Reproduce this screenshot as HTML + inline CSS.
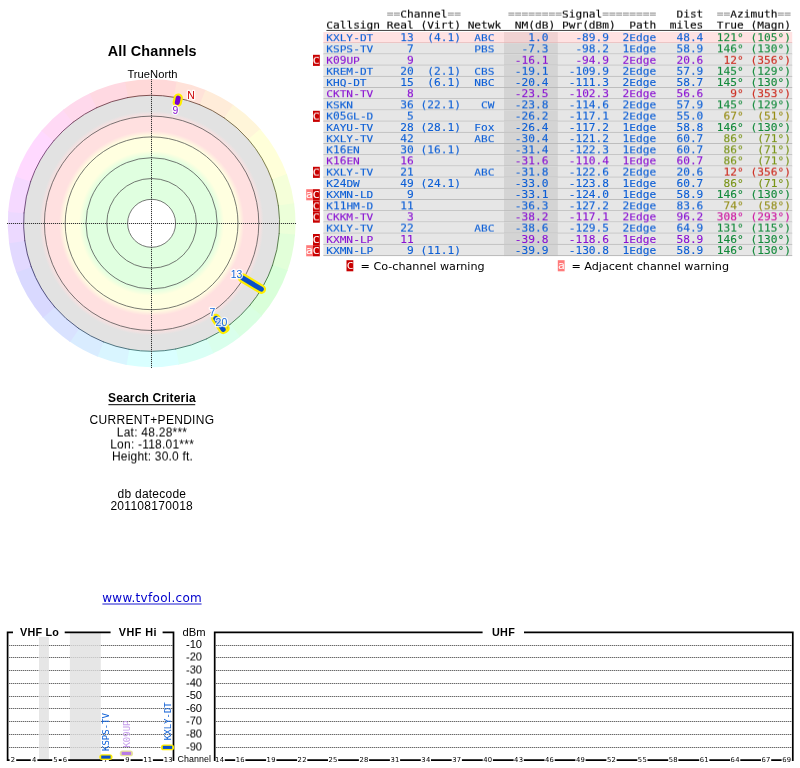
<!DOCTYPE html>
<html lang="en"><head><meta charset="utf-8"><title>TV Fool - All Channels</title>
<style>html,body{margin:0;padding:0;background:#fff}body{width:800px;height:768px;overflow:hidden}svg{display:block;will-change:opacity}text{white-space:pre}.b{fill:#0d5fd6;stroke:#0d5fd6}.p{fill:#8a12d2;stroke:#8a12d2}.g{fill:#148a3c;stroke:#148a3c}.o{fill:#968c14;stroke:#968c14}.y{fill:#7a9418;stroke:#7a9418}.z{fill:#948f1a;stroke:#948f1a}.r{fill:#cc2a1e;stroke:#cc2a1e}.m{fill:#cc14a0;stroke:#cc14a0}.k{fill:#000;stroke:#000}.e{fill:#8c8c8c;stroke:#8c8c8c}.w{fill:#fff;stroke:#fff}</style>
</head><body>
<svg width="800" height="768" viewBox="0 0 800 768">
<defs>
<filter id="s2" x="-5%" y="-40%" width="110%" height="180%" color-interpolation-filters="sRGB"><feConvolveMatrix order="1 3" kernelMatrix="0 0.8 0.2" divisor="1" edgeMode="none" preserveAlpha="false"/></filter>
<filter id="s4" x="-5%" y="-40%" width="110%" height="180%" color-interpolation-filters="sRGB"><feConvolveMatrix order="1 3" kernelMatrix="0 0.6 0.4" divisor="1" edgeMode="none" preserveAlpha="false"/></filter>
<filter id="s5" x="-5%" y="-40%" width="110%" height="180%" color-interpolation-filters="sRGB"><feConvolveMatrix order="1 3" kernelMatrix="0 0.5 0.5" divisor="1" edgeMode="none" preserveAlpha="false"/></filter>
<filter id="s6" x="-5%" y="-40%" width="110%" height="180%" color-interpolation-filters="sRGB"><feConvolveMatrix order="1 3" kernelMatrix="0 0.4 0.6" divisor="1" edgeMode="none" preserveAlpha="false"/></filter>
<filter id="s8" x="-5%" y="-40%" width="110%" height="180%" color-interpolation-filters="sRGB"><feConvolveMatrix order="1 3" kernelMatrix="0 0.2 0.8" divisor="1" edgeMode="none" preserveAlpha="false"/></filter>
<radialGradient id="rg" gradientUnits="userSpaceOnUse" cx="151.6" cy="223.3" r="128.0"><stop offset="0.0000" stop-color="#e0ffe0"/><stop offset="0.5156" stop-color="#e0ffe0"/><stop offset="0.5664" stop-color="#ffffe0"/><stop offset="0.6781" stop-color="#ffffe0"/><stop offset="0.7227" stop-color="#ffe0e0"/><stop offset="0.8320" stop-color="#ffe0e0"/><stop offset="0.8750" stop-color="#e2e2e2"/><stop offset="1.0000" stop-color="#e2e2e2"/></radialGradient>
</defs>
<g id="radar">
<path d="M151.6 223.3L124.14 82.04A143.9 143.9 0 0 1 177.58 81.76Z" fill="#ffd9d9"/>
<path d="M151.6 223.3L176.59 81.59A143.9 143.9 0 0 1 206.44 90.26Z" fill="#ffe2d9"/>
<path d="M151.6 223.3L205.51 89.88A143.9 143.9 0 0 1 233.93 105.28Z" fill="#ffecd9"/>
<path d="M151.6 223.3L233.11 104.71A143.9 143.9 0 0 1 260.86 129.65Z" fill="#fff5d9"/>
<path d="M151.6 223.3L260.20 128.89A143.9 143.9 0 0 1 287.16 175.03Z" fill="#ffffd9"/>
<path d="M151.6 223.3L286.82 174.08A143.9 143.9 0 0 1 294.24 204.27Z" fill="#f5ffd9"/>
<path d="M151.6 223.3L294.10 203.27A143.9 143.9 0 0 1 294.97 235.59Z" fill="#ecffd9"/>
<path d="M151.6 223.3L295.06 234.59A143.9 143.9 0 0 1 287.33 271.10Z" fill="#e2ffd9"/>
<path d="M151.6 223.3L287.66 270.15A143.9 143.9 0 0 1 261.19 316.56Z" fill="#d9ffd9"/>
<path d="M151.6 223.3L261.83 315.80A143.9 143.9 0 0 1 239.40 337.31Z" fill="#d9ffe2"/>
<path d="M151.6 223.3L240.19 336.69A143.9 143.9 0 0 1 212.64 353.61Z" fill="#d9ffec"/>
<path d="M151.6 223.3L213.55 353.18A143.9 143.9 0 0 1 178.07 364.74Z" fill="#d9fff5"/>
<path d="M151.6 223.3L179.06 364.56A143.9 143.9 0 0 1 125.62 364.84Z" fill="#d9ffff"/>
<path d="M151.6 223.3L126.61 365.01A143.9 143.9 0 0 1 96.76 356.34Z" fill="#d9f5ff"/>
<path d="M151.6 223.3L97.69 356.72A143.9 143.9 0 0 1 69.27 341.32Z" fill="#d9ecff"/>
<path d="M151.6 223.3L70.09 341.89A143.9 143.9 0 0 1 42.34 316.95Z" fill="#d9e2ff"/>
<path d="M151.6 223.3L43.00 317.71A143.9 143.9 0 0 1 16.04 271.57Z" fill="#d9d9ff"/>
<path d="M151.6 223.3L16.38 272.52A143.9 143.9 0 0 1 8.96 242.33Z" fill="#e2d9ff"/>
<path d="M151.6 223.3L9.10 243.33A143.9 143.9 0 0 1 8.23 211.01Z" fill="#ecd9ff"/>
<path d="M151.6 223.3L8.14 212.01A143.9 143.9 0 0 1 15.87 175.50Z" fill="#f5d9ff"/>
<path d="M151.6 223.3L15.54 176.45A143.9 143.9 0 0 1 42.01 130.04Z" fill="#ffd9ff"/>
<path d="M151.6 223.3L41.37 130.80A143.9 143.9 0 0 1 63.80 109.29Z" fill="#ffd9f5"/>
<path d="M151.6 223.3L63.01 109.91A143.9 143.9 0 0 1 90.56 92.99Z" fill="#ffd9ec"/>
<path d="M151.6 223.3L89.65 93.42A143.9 143.9 0 0 1 125.13 81.86Z" fill="#ffd9e2"/>
<circle cx="151.6" cy="223.3" r="128.0" fill="url(#rg)"/>
<circle cx="151.6" cy="223.3" r="24.0" fill="#fff"/>
<g fill="none" stroke="#4c4c4c" stroke-width="0.75">
<circle cx="151.6" cy="223.3" r="24.0"/>
<circle cx="151.6" cy="223.3" r="44.8"/>
<circle cx="151.6" cy="223.3" r="65.6"/>
<circle cx="151.6" cy="223.3" r="86.4"/>
<circle cx="151.6" cy="223.3" r="107.2"/>
</g>
<g fill="none" stroke-width="0.85">
<path d="M127.18 97.65A128.0 128.0 0 0 1 174.49 97.36" stroke="#6b3636"/>
<path d="M173.83 97.24A128.0 128.0 0 0 1 200.17 104.87" stroke="#6b4336"/>
<path d="M199.55 104.62A128.0 128.0 0 0 1 224.65 118.19" stroke="#6b5036"/>
<path d="M224.10 117.81A128.0 128.0 0 0 1 248.64 139.83" stroke="#6b5e36"/>
<path d="M248.20 139.32A128.0 128.0 0 0 1 272.11 180.15" stroke="#6b6b36"/>
<path d="M271.88 179.52A128.0 128.0 0 0 1 278.45 206.15" stroke="#5e6b36"/>
<path d="M278.35 205.49A128.0 128.0 0 0 1 279.15 234.01" stroke="#506b36"/>
<path d="M279.21 233.34A128.0 128.0 0 0 1 272.41 265.61" stroke="#436b36"/>
<path d="M272.63 264.97A128.0 128.0 0 0 1 249.22 306.09" stroke="#366b36"/>
<path d="M249.65 305.58A128.0 128.0 0 0 1 229.88 324.58" stroke="#366b43"/>
<path d="M230.40 324.17A128.0 128.0 0 0 1 206.10 339.12" stroke="#366b50"/>
<path d="M206.71 338.83A128.0 128.0 0 0 1 175.37 349.07" stroke="#366b5e"/>
<path d="M176.02 348.95A128.0 128.0 0 0 1 128.71 349.24" stroke="#366b6b"/>
<path d="M129.37 349.36A128.0 128.0 0 0 1 103.03 341.73" stroke="#365e6b"/>
<path d="M103.65 341.98A128.0 128.0 0 0 1 78.55 328.41" stroke="#36506b"/>
<path d="M79.10 328.79A128.0 128.0 0 0 1 54.56 306.77" stroke="#36436b"/>
<path d="M55.00 307.28A128.0 128.0 0 0 1 31.09 266.45" stroke="#36366b"/>
<path d="M31.32 267.08A128.0 128.0 0 0 1 24.75 240.45" stroke="#43366b"/>
<path d="M24.85 241.11A128.0 128.0 0 0 1 24.05 212.59" stroke="#50366b"/>
<path d="M23.99 213.26A128.0 128.0 0 0 1 30.79 180.99" stroke="#5e366b"/>
<path d="M30.57 181.63A128.0 128.0 0 0 1 53.98 140.51" stroke="#6b366b"/>
<path d="M53.55 141.02A128.0 128.0 0 0 1 73.32 122.02" stroke="#6b365e"/>
<path d="M72.80 122.43A128.0 128.0 0 0 1 97.10 107.48" stroke="#6b3650"/>
<path d="M96.49 107.77A128.0 128.0 0 0 1 127.83 97.53" stroke="#6b3643"/>
</g>
<path d="M7 223.5H296M151.5 79V368" stroke="#000" stroke-opacity="0.14" stroke-width="1" fill="none"/>
<path d="M7 223.5H296M151.5 79V368" stroke="#333" stroke-width="1" stroke-dasharray="1 1" fill="none"/>
</g>
<g id="markers" fill="none" stroke-linecap="round">
<path d="M224.44 327.33L225.02 328.15" stroke="#fe0" stroke-width="9.4"/><path d="M224.44 327.33L225.02 328.15" stroke="#0a50c8" stroke-width="5"/>
<path d="M177.30 102.40L178.21 98.10" stroke="#fe0" stroke-width="9.4"/><path d="M177.30 102.40L178.21 98.10" stroke="#7a00d0" stroke-width="5"/>
<path d="M215.80 318.47L223.18 329.42" stroke="#fe0" stroke-width="9.4"/><path d="M215.80 318.47L223.18 329.42" stroke="#0a50c8" stroke-width="5"/>
<path d="M242.46 277.89L261.32 289.22" stroke="#fe0" stroke-width="9.4"/><path d="M242.46 277.89L261.32 289.22" stroke="#0a50c8" stroke-width="5"/>
</g>
<g id="marker-labels" font-family="'Liberation Sans',Arial,Helvetica,sans-serif" font-size="10.4" text-anchor="middle" stroke="#fff" stroke-opacity="0.8" stroke-width="2.6" stroke-linejoin="round" paint-order="stroke">
<text x="191.0" y="99.0" fill="#cc0000">N</text>
<text x="175.3" y="114.0" fill="#8a12d2">9</text>
<text x="236.6" y="277.8" fill="#1668dc">13</text>
<text x="212.4" y="316.0" fill="#1668dc">7</text>
<text x="221.4" y="326.2" fill="#1668dc">20</text>
</g>
<g id="info" font-family="'Liberation Sans',Arial,Helvetica,sans-serif" fill="#000">
<text x="107.8" y="56" textLength="88.8" lengthAdjust="spacing" font-size="14.4" font-weight="bold">All Channels</text>
<text x="127.4" y="78" textLength="50.2" lengthAdjust="spacing" font-size="11.2">TrueNorth</text>
<text x="108.0" y="402" textLength="87.6" lengthAdjust="spacing" font-size="12" font-weight="bold">Search Criteria</text>
<path d="M108.4 404.7H195.2" stroke="#000" stroke-width="1"/>
<text x="89.6" y="424" textLength="124.4" lengthAdjust="spacing" font-size="12">CURRENT+PENDING</text>
<text x="116.8" y="436" textLength="70.2" lengthAdjust="spacing" font-size="12" filter="url(#s5)">Lat: 48.28***</text>
<text x="110.2" y="448" textLength="83.6" lengthAdjust="spacing" font-size="12" filter="url(#s5)">Lon: -118.01***</text>
<text x="112.0" y="460" textLength="80.8" lengthAdjust="spacing" font-size="12" filter="url(#s5)">Height: 30.0 ft.</text>
<text x="117.6" y="498" textLength="68.4" lengthAdjust="spacing" font-size="12">db datecode</text>
<text x="110.4" y="510" textLength="82.4" lengthAdjust="spacing" font-size="12">201108170018</text>
<text x="102.2" y="602" textLength="99.6" lengthAdjust="spacing" font-size="12" font-family="'DejaVu Sans','Liberation Sans',sans-serif" fill="#00c">www.tvfool.com</text>
<path d="M102.4 604H201.6" stroke="#00c" stroke-width="0.9"/>
</g>
<g id="table-bg">
<rect x="323.4" y="32.0" width="468.8" height="11.25" fill="#ffe2e2"/><rect x="504.0" y="32.0" width="53.8" height="11.25" fill="#f0d2d2"/><rect x="323.4" y="42.35" width="468.8" height="0.9" fill="#e2b6b6"/>
<rect x="323.4" y="43.2" width="468.8" height="11.25" fill="#e6e6e6"/><rect x="504.0" y="43.2" width="53.8" height="11.25" fill="#d4d4d4"/><rect x="323.4" y="53.55" width="468.8" height="0.9" fill="#b6b6b6"/>
<rect x="323.4" y="54.4" width="468.8" height="11.25" fill="#e6e6e6"/><rect x="504.0" y="54.4" width="53.8" height="11.25" fill="#d4d4d4"/><rect x="323.4" y="64.75" width="468.8" height="0.9" fill="#b6b6b6"/>
<rect x="313.0" y="54.8" width="6.8" height="11.1" fill="#c80000"/>
<rect x="323.4" y="65.6" width="468.8" height="11.25" fill="#e6e6e6"/><rect x="504.0" y="65.6" width="53.8" height="11.25" fill="#d4d4d4"/><rect x="323.4" y="75.95" width="468.8" height="0.9" fill="#b6b6b6"/>
<rect x="323.4" y="76.8" width="468.8" height="11.25" fill="#e6e6e6"/><rect x="504.0" y="76.8" width="53.8" height="11.25" fill="#d4d4d4"/><rect x="323.4" y="87.15" width="468.8" height="0.9" fill="#b6b6b6"/>
<rect x="323.4" y="88.0" width="468.8" height="11.25" fill="#e6e6e6"/><rect x="504.0" y="88.0" width="53.8" height="11.25" fill="#d4d4d4"/><rect x="323.4" y="98.35" width="468.8" height="0.9" fill="#b6b6b6"/>
<rect x="323.4" y="99.2" width="468.8" height="11.25" fill="#e6e6e6"/><rect x="504.0" y="99.2" width="53.8" height="11.25" fill="#d4d4d4"/><rect x="323.4" y="109.55" width="468.8" height="0.9" fill="#b6b6b6"/>
<rect x="323.4" y="110.4" width="468.8" height="11.25" fill="#e6e6e6"/><rect x="504.0" y="110.4" width="53.8" height="11.25" fill="#d4d4d4"/><rect x="323.4" y="120.75" width="468.8" height="0.9" fill="#b6b6b6"/>
<rect x="313.0" y="110.8" width="6.8" height="11.1" fill="#c80000"/>
<rect x="323.4" y="121.6" width="468.8" height="11.25" fill="#e6e6e6"/><rect x="504.0" y="121.6" width="53.8" height="11.25" fill="#d4d4d4"/><rect x="323.4" y="131.95" width="468.8" height="0.9" fill="#b6b6b6"/>
<rect x="323.4" y="132.8" width="468.8" height="11.25" fill="#e6e6e6"/><rect x="504.0" y="132.8" width="53.8" height="11.25" fill="#d4d4d4"/><rect x="323.4" y="143.15" width="468.8" height="0.9" fill="#b6b6b6"/>
<rect x="323.4" y="144.0" width="468.8" height="11.25" fill="#e6e6e6"/><rect x="504.0" y="144.0" width="53.8" height="11.25" fill="#d4d4d4"/><rect x="323.4" y="154.35" width="468.8" height="0.9" fill="#b6b6b6"/>
<rect x="323.4" y="155.2" width="468.8" height="11.25" fill="#e6e6e6"/><rect x="504.0" y="155.2" width="53.8" height="11.25" fill="#d4d4d4"/><rect x="323.4" y="165.55" width="468.8" height="0.9" fill="#b6b6b6"/>
<rect x="323.4" y="166.4" width="468.8" height="11.25" fill="#e6e6e6"/><rect x="504.0" y="166.4" width="53.8" height="11.25" fill="#d4d4d4"/><rect x="323.4" y="176.75" width="468.8" height="0.9" fill="#b6b6b6"/>
<rect x="313.0" y="166.8" width="6.8" height="11.1" fill="#c80000"/>
<rect x="323.4" y="177.6" width="468.8" height="11.25" fill="#e6e6e6"/><rect x="504.0" y="177.6" width="53.8" height="11.25" fill="#d4d4d4"/><rect x="323.4" y="187.95" width="468.8" height="0.9" fill="#b6b6b6"/>
<rect x="323.4" y="188.8" width="468.8" height="11.25" fill="#e6e6e6"/><rect x="504.0" y="188.8" width="53.8" height="11.25" fill="#d4d4d4"/><rect x="323.4" y="199.15" width="468.8" height="0.9" fill="#b6b6b6"/>
<rect x="313.0" y="189.2" width="6.8" height="11.1" fill="#c80000"/>
<rect x="306.2" y="189.2" width="6.8" height="11.1" fill="#ff7a7a"/>
<rect x="323.4" y="200.0" width="468.8" height="11.25" fill="#e6e6e6"/><rect x="504.0" y="200.0" width="53.8" height="11.25" fill="#d4d4d4"/><rect x="323.4" y="210.35" width="468.8" height="0.9" fill="#b6b6b6"/>
<rect x="313.0" y="200.4" width="6.8" height="11.1" fill="#c80000"/>
<rect x="323.4" y="211.2" width="468.8" height="11.25" fill="#e6e6e6"/><rect x="504.0" y="211.2" width="53.8" height="11.25" fill="#d4d4d4"/><rect x="323.4" y="221.55" width="468.8" height="0.9" fill="#b6b6b6"/>
<rect x="313.0" y="211.6" width="6.8" height="11.1" fill="#c80000"/>
<rect x="323.4" y="222.4" width="468.8" height="11.25" fill="#e6e6e6"/><rect x="504.0" y="222.4" width="53.8" height="11.25" fill="#d4d4d4"/><rect x="323.4" y="232.75" width="468.8" height="0.9" fill="#b6b6b6"/>
<rect x="323.4" y="233.6" width="468.8" height="11.25" fill="#e6e6e6"/><rect x="504.0" y="233.6" width="53.8" height="11.25" fill="#d4d4d4"/><rect x="323.4" y="243.95" width="468.8" height="0.9" fill="#b6b6b6"/>
<rect x="313.0" y="234.0" width="6.8" height="11.1" fill="#c80000"/>
<rect x="323.4" y="244.8" width="468.8" height="11.25" fill="#e6e6e6"/><rect x="504.0" y="244.8" width="53.8" height="11.25" fill="#d4d4d4"/><rect x="323.4" y="255.15" width="468.8" height="0.9" fill="#b6b6b6"/>
<rect x="313.0" y="245.2" width="6.8" height="11.1" fill="#c80000"/>
<rect x="306.2" y="245.2" width="6.8" height="11.1" fill="#ff7a7a"/>
<rect x="346.5" y="260.2" width="6.8" height="11.1" fill="#c80000"/>
<rect x="557.8" y="260.2" width="6.8" height="11.1" fill="#ff7a7a"/>
<path d="M326.4 30.45H790.6" stroke="#111" stroke-width="0.8"/>
</g>
<g id="table" font-family="'DejaVu Sans Mono','Liberation Mono',monospace" font-size="10.4" stroke-width="0.12">
<g filter="url(#s6)"><text transform="matrix(1.0757 0 0 1 386.81 17)" class="e">==</text><text transform="matrix(1.0757 0 0 0.89 400.28 17)" class="k">C</text><text transform="matrix(1.0757 0 0 1 407.02 17)" class="k">hannel</text><text transform="matrix(1.0757 0 0 1 447.43 17)" class="e">==       </text><text transform="matrix(1.0757 0 0 1 508.04 17)" class="e">========</text><text transform="matrix(1.0757 0 0 0.89 561.92 17)" class="k">S</text><text transform="matrix(1.0757 0 0 1 568.66 17)" class="k">ignal</text><text transform="matrix(1.0757 0 0 1 602.34 17)" class="e">========   </text><text transform="matrix(1.0757 0 0 0.89 676.42 17)" class="k">D</text><text transform="matrix(1.0757 0 0 1 683.15 17)" class="k">ist  </text><text transform="matrix(1.0757 0 0 1 716.83 17)" class="e">==</text><text transform="matrix(1.0757 0 0 0.89 730.30 17)" class="k">A</text><text transform="matrix(1.0757 0 0 1 737.04 17)" class="k">zimuth</text><text transform="matrix(1.0757 0 0 1 777.44 17)" class="e">==</text></g>
<g filter="url(#s6)"><text transform="matrix(1.0757 0 0 0.89 326.20 28)" class="k">C</text><text transform="matrix(1.0757 0 0 1 332.94 28)" class="k">allsign </text><text transform="matrix(1.0757 0 0 0.89 386.81 28)" class="k">R</text><text transform="matrix(1.0757 0 0 1 393.55 28)" class="k">eal </text><text transform="matrix(1.0757 0 0 1 420.49 28)" class="k">(</text><text transform="matrix(1.0757 0 0 0.89 427.23 28)" class="k">V</text><text transform="matrix(1.0757 0 0 1 433.96 28)" class="k">irt) </text><text transform="matrix(1.0757 0 0 0.89 467.63 28)" class="k">N</text><text transform="matrix(1.0757 0 0 1 474.37 28)" class="k">etwk  </text><text transform="matrix(1.0757 0 0 0.89 514.78 28)" class="k">NM</text><text transform="matrix(1.0757 0 0 1 528.25 28)" class="k">(d</text><text transform="matrix(1.0757 0 0 0.89 541.72 28)" class="k">B</text><text transform="matrix(1.0757 0 0 1 548.46 28)" class="k">) </text><text transform="matrix(1.0757 0 0 0.89 561.92 28)" class="k">P</text><text transform="matrix(1.0757 0 0 1 568.66 28)" class="k">wr(d</text><text transform="matrix(1.0757 0 0 0.89 595.60 28)" class="k">B</text><text transform="matrix(1.0757 0 0 1 602.34 28)" class="k">m)  </text><text transform="matrix(1.0757 0 0 0.89 629.27 28)" class="k">P</text><text transform="matrix(1.0757 0 0 1 636.01 28)" class="k">ath  </text><text transform="matrix(1.0757 0 0 1 669.68 28)" class="k">miles  </text><text transform="matrix(1.0757 0 0 0.89 716.83 28)" class="k">T</text><text transform="matrix(1.0757 0 0 1 723.57 28)" class="k">rue </text><text transform="matrix(1.0757 0 0 1 750.50 28)" class="k">(</text><text transform="matrix(1.0757 0 0 0.89 757.24 28)" class="k">M</text><text transform="matrix(1.0757 0 0 1 763.98 28)" class="k">agn)</text></g>
<g filter="url(#s2)"><text transform="matrix(1.0757 0 0 0.89 326.20 41)" class="b">KXLY</text><text transform="matrix(1.0757 0 0 1 353.14 41)" class="b">-</text><text transform="matrix(1.0757 0 0 0.89 359.88 41)" class="b">DT    </text><text transform="matrix(1.0757 0 0 1 400.28 41)" class="b">13  </text><text transform="matrix(1.0757 0 0 1 427.23 41)" class="b">(4.1)  </text><text transform="matrix(1.0757 0 0 0.89 474.37 41)" class="b">ABC     </text><text transform="matrix(1.0757 0 0 1 528.25 41)" class="b">1.0    </text><text transform="matrix(1.0757 0 0 1 575.39 41)" class="b">-89.9  </text><text transform="matrix(1.0757 0 0 1 622.54 41)" class="b">2</text><text transform="matrix(1.0757 0 0 0.89 629.27 41)" class="b">E</text><text transform="matrix(1.0757 0 0 1 636.01 41)" class="b">dge   </text><text transform="matrix(1.0757 0 0 1 676.42 41)" class="b">48.4  </text><text transform="matrix(1.0757 0 0 1 716.83 41)" class="g">121° </text><text transform="matrix(1.0757 0 0 1 750.50 41)" class="g">(105°)</text></g>
<g filter="url(#s4)"><text transform="matrix(1.0757 0 0 0.89 326.20 52)" class="b">KSPS</text><text transform="matrix(1.0757 0 0 1 353.14 52)" class="b">-</text><text transform="matrix(1.0757 0 0 0.89 359.88 52)" class="b">TV     </text><text transform="matrix(1.0757 0 0 1 407.02 52)" class="b">7         </text><text transform="matrix(1.0757 0 0 0.89 474.37 52)" class="b">PBS    </text><text transform="matrix(1.0757 0 0 1 521.51 52)" class="b">-7.3    </text><text transform="matrix(1.0757 0 0 1 575.39 52)" class="b">-98.2  </text><text transform="matrix(1.0757 0 0 1 622.54 52)" class="b">1</text><text transform="matrix(1.0757 0 0 0.89 629.27 52)" class="b">E</text><text transform="matrix(1.0757 0 0 1 636.01 52)" class="b">dge   </text><text transform="matrix(1.0757 0 0 1 676.42 52)" class="b">58.9  </text><text transform="matrix(1.0757 0 0 1 716.83 52)" class="g">146° </text><text transform="matrix(1.0757 0 0 1 750.50 52)" class="g">(130°)</text></g>
<g filter="url(#s8)"><text transform="matrix(1.0757 0 0 0.89 312.73 63)" class="w">C </text><text transform="matrix(1.0757 0 0 0.89 326.20 63)" class="p">K</text><text transform="matrix(1.0757 0 0 1 332.94 63)" class="p">09</text><text transform="matrix(1.0757 0 0 0.89 346.40 63)" class="p">UP       </text><text transform="matrix(1.0757 0 0 1 407.02 63)" class="p">9               </text><text transform="matrix(1.0757 0 0 1 514.78 63)" class="p">-16.1    </text><text transform="matrix(1.0757 0 0 1 575.39 63)" class="p">-94.9  </text><text transform="matrix(1.0757 0 0 1 622.54 63)" class="p">2</text><text transform="matrix(1.0757 0 0 0.89 629.27 63)" class="p">E</text><text transform="matrix(1.0757 0 0 1 636.01 63)" class="p">dge   </text><text transform="matrix(1.0757 0 0 1 676.42 63)" class="p">20.6   </text><text transform="matrix(1.0757 0 0 1 723.57 63)" class="r">12° </text><text transform="matrix(1.0757 0 0 1 750.50 63)" class="r">(356°)</text></g>
<g filter="url(#s8)"><text transform="matrix(1.0757 0 0 0.89 326.20 74)" class="b">KREM</text><text transform="matrix(1.0757 0 0 1 353.14 74)" class="b">-</text><text transform="matrix(1.0757 0 0 0.89 359.88 74)" class="b">DT    </text><text transform="matrix(1.0757 0 0 1 400.28 74)" class="b">20  </text><text transform="matrix(1.0757 0 0 1 427.23 74)" class="b">(2.1)  </text><text transform="matrix(1.0757 0 0 0.89 474.37 74)" class="b">CBS   </text><text transform="matrix(1.0757 0 0 1 514.78 74)" class="b">-19.1   </text><text transform="matrix(1.0757 0 0 1 568.66 74)" class="b">-109.9  </text><text transform="matrix(1.0757 0 0 1 622.54 74)" class="b">2</text><text transform="matrix(1.0757 0 0 0.89 629.27 74)" class="b">E</text><text transform="matrix(1.0757 0 0 1 636.01 74)" class="b">dge   </text><text transform="matrix(1.0757 0 0 1 676.42 74)" class="b">57.9  </text><text transform="matrix(1.0757 0 0 1 716.83 74)" class="g">145° </text><text transform="matrix(1.0757 0 0 1 750.50 74)" class="g">(129°)</text></g>
<g><text transform="matrix(1.0757 0 0 0.89 326.20 86)" class="b">KHQ</text><text transform="matrix(1.0757 0 0 1 346.40 86)" class="b">-</text><text transform="matrix(1.0757 0 0 0.89 353.14 86)" class="b">DT     </text><text transform="matrix(1.0757 0 0 1 400.28 86)" class="b">15  </text><text transform="matrix(1.0757 0 0 1 427.23 86)" class="b">(6.1)  </text><text transform="matrix(1.0757 0 0 0.89 474.37 86)" class="b">NBC   </text><text transform="matrix(1.0757 0 0 1 514.78 86)" class="b">-20.4   </text><text transform="matrix(1.0757 0 0 1 568.66 86)" class="b">-111.3  </text><text transform="matrix(1.0757 0 0 1 622.54 86)" class="b">2</text><text transform="matrix(1.0757 0 0 0.89 629.27 86)" class="b">E</text><text transform="matrix(1.0757 0 0 1 636.01 86)" class="b">dge   </text><text transform="matrix(1.0757 0 0 1 676.42 86)" class="b">58.7  </text><text transform="matrix(1.0757 0 0 1 716.83 86)" class="g">145° </text><text transform="matrix(1.0757 0 0 1 750.50 86)" class="g">(130°)</text></g>
<g filter="url(#s2)"><text transform="matrix(1.0757 0 0 0.89 326.20 97)" class="p">CKTN</text><text transform="matrix(1.0757 0 0 1 353.14 97)" class="p">-</text><text transform="matrix(1.0757 0 0 0.89 359.88 97)" class="p">TV     </text><text transform="matrix(1.0757 0 0 1 407.02 97)" class="p">8               </text><text transform="matrix(1.0757 0 0 1 514.78 97)" class="p">-23.5   </text><text transform="matrix(1.0757 0 0 1 568.66 97)" class="p">-102.3  </text><text transform="matrix(1.0757 0 0 1 622.54 97)" class="p">2</text><text transform="matrix(1.0757 0 0 0.89 629.27 97)" class="p">E</text><text transform="matrix(1.0757 0 0 1 636.01 97)" class="p">dge   </text><text transform="matrix(1.0757 0 0 1 676.42 97)" class="p">56.6    </text><text transform="matrix(1.0757 0 0 1 730.30 97)" class="r">9° </text><text transform="matrix(1.0757 0 0 1 750.50 97)" class="r">(353°)</text></g>
<g filter="url(#s4)"><text transform="matrix(1.0757 0 0 0.89 326.20 108)" class="b">KSKN       </text><text transform="matrix(1.0757 0 0 1 400.28 108)" class="b">36 </text><text transform="matrix(1.0757 0 0 1 420.49 108)" class="b">(22.1)   </text><text transform="matrix(1.0757 0 0 0.89 481.11 108)" class="b">CW   </text><text transform="matrix(1.0757 0 0 1 514.78 108)" class="b">-23.8   </text><text transform="matrix(1.0757 0 0 1 568.66 108)" class="b">-114.6  </text><text transform="matrix(1.0757 0 0 1 622.54 108)" class="b">2</text><text transform="matrix(1.0757 0 0 0.89 629.27 108)" class="b">E</text><text transform="matrix(1.0757 0 0 1 636.01 108)" class="b">dge   </text><text transform="matrix(1.0757 0 0 1 676.42 108)" class="b">57.9  </text><text transform="matrix(1.0757 0 0 1 716.83 108)" class="g">145° </text><text transform="matrix(1.0757 0 0 1 750.50 108)" class="g">(129°)</text></g>
<g filter="url(#s6)"><text transform="matrix(1.0757 0 0 0.89 312.73 119)" class="w">C </text><text transform="matrix(1.0757 0 0 0.89 326.20 119)" class="b">K</text><text transform="matrix(1.0757 0 0 1 332.94 119)" class="b">05</text><text transform="matrix(1.0757 0 0 0.89 346.40 119)" class="b">GL</text><text transform="matrix(1.0757 0 0 1 359.88 119)" class="b">-</text><text transform="matrix(1.0757 0 0 0.89 366.61 119)" class="b">D     </text><text transform="matrix(1.0757 0 0 1 407.02 119)" class="b">5               </text><text transform="matrix(1.0757 0 0 1 514.78 119)" class="b">-26.2   </text><text transform="matrix(1.0757 0 0 1 568.66 119)" class="b">-117.1  </text><text transform="matrix(1.0757 0 0 1 622.54 119)" class="b">2</text><text transform="matrix(1.0757 0 0 0.89 629.27 119)" class="b">E</text><text transform="matrix(1.0757 0 0 1 636.01 119)" class="b">dge   </text><text transform="matrix(1.0757 0 0 1 676.42 119)" class="b">55.0   </text><text transform="matrix(1.0757 0 0 1 723.57 119)" class="o">67°  </text><text transform="matrix(1.0757 0 0 1 757.24 119)" class="o">(51°)</text></g>
<g><text transform="matrix(1.0757 0 0 0.89 326.20 131)" class="b">KAYU</text><text transform="matrix(1.0757 0 0 1 353.14 131)" class="b">-</text><text transform="matrix(1.0757 0 0 0.89 359.88 131)" class="b">TV    </text><text transform="matrix(1.0757 0 0 1 400.28 131)" class="b">28 </text><text transform="matrix(1.0757 0 0 1 420.49 131)" class="b">(28.1)  </text><text transform="matrix(1.0757 0 0 0.89 474.37 131)" class="b">F</text><text transform="matrix(1.0757 0 0 1 481.11 131)" class="b">ox   </text><text transform="matrix(1.0757 0 0 1 514.78 131)" class="b">-26.4   </text><text transform="matrix(1.0757 0 0 1 568.66 131)" class="b">-117.2  </text><text transform="matrix(1.0757 0 0 1 622.54 131)" class="b">1</text><text transform="matrix(1.0757 0 0 0.89 629.27 131)" class="b">E</text><text transform="matrix(1.0757 0 0 1 636.01 131)" class="b">dge   </text><text transform="matrix(1.0757 0 0 1 676.42 131)" class="b">58.8  </text><text transform="matrix(1.0757 0 0 1 716.83 131)" class="g">146° </text><text transform="matrix(1.0757 0 0 1 750.50 131)" class="g">(130°)</text></g>
<g filter="url(#s2)"><text transform="matrix(1.0757 0 0 0.89 326.20 142)" class="b">KXLY</text><text transform="matrix(1.0757 0 0 1 353.14 142)" class="b">-</text><text transform="matrix(1.0757 0 0 0.89 359.88 142)" class="b">TV    </text><text transform="matrix(1.0757 0 0 1 400.28 142)" class="b">42         </text><text transform="matrix(1.0757 0 0 0.89 474.37 142)" class="b">ABC   </text><text transform="matrix(1.0757 0 0 1 514.78 142)" class="b">-30.4   </text><text transform="matrix(1.0757 0 0 1 568.66 142)" class="b">-121.2  </text><text transform="matrix(1.0757 0 0 1 622.54 142)" class="b">1</text><text transform="matrix(1.0757 0 0 0.89 629.27 142)" class="b">E</text><text transform="matrix(1.0757 0 0 1 636.01 142)" class="b">dge   </text><text transform="matrix(1.0757 0 0 1 676.42 142)" class="b">60.7   </text><text transform="matrix(1.0757 0 0 1 723.57 142)" class="y">86°  </text><text transform="matrix(1.0757 0 0 1 757.24 142)" class="y">(71°)</text></g>
<g filter="url(#s4)"><text transform="matrix(1.0757 0 0 0.89 326.20 153)" class="b">K</text><text transform="matrix(1.0757 0 0 1 332.94 153)" class="b">16</text><text transform="matrix(1.0757 0 0 0.89 346.40 153)" class="b">EN      </text><text transform="matrix(1.0757 0 0 1 400.28 153)" class="b">30 </text><text transform="matrix(1.0757 0 0 1 420.49 153)" class="b">(16.1)        </text><text transform="matrix(1.0757 0 0 1 514.78 153)" class="b">-31.4   </text><text transform="matrix(1.0757 0 0 1 568.66 153)" class="b">-122.3  </text><text transform="matrix(1.0757 0 0 1 622.54 153)" class="b">1</text><text transform="matrix(1.0757 0 0 0.89 629.27 153)" class="b">E</text><text transform="matrix(1.0757 0 0 1 636.01 153)" class="b">dge   </text><text transform="matrix(1.0757 0 0 1 676.42 153)" class="b">60.7   </text><text transform="matrix(1.0757 0 0 1 723.57 153)" class="y">86°  </text><text transform="matrix(1.0757 0 0 1 757.24 153)" class="y">(71°)</text></g>
<g filter="url(#s4)"><text transform="matrix(1.0757 0 0 0.89 326.20 164)" class="p">K</text><text transform="matrix(1.0757 0 0 1 332.94 164)" class="p">16</text><text transform="matrix(1.0757 0 0 0.89 346.40 164)" class="p">EN      </text><text transform="matrix(1.0757 0 0 1 400.28 164)" class="p">16               </text><text transform="matrix(1.0757 0 0 1 514.78 164)" class="p">-31.6   </text><text transform="matrix(1.0757 0 0 1 568.66 164)" class="p">-110.4  </text><text transform="matrix(1.0757 0 0 1 622.54 164)" class="p">1</text><text transform="matrix(1.0757 0 0 0.89 629.27 164)" class="p">E</text><text transform="matrix(1.0757 0 0 1 636.01 164)" class="p">dge   </text><text transform="matrix(1.0757 0 0 1 676.42 164)" class="p">60.7   </text><text transform="matrix(1.0757 0 0 1 723.57 164)" class="y">86°  </text><text transform="matrix(1.0757 0 0 1 757.24 164)" class="y">(71°)</text></g>
<g filter="url(#s6)"><text transform="matrix(1.0757 0 0 0.89 312.73 175)" class="w">C </text><text transform="matrix(1.0757 0 0 0.89 326.20 175)" class="b">KXLY</text><text transform="matrix(1.0757 0 0 1 353.14 175)" class="b">-</text><text transform="matrix(1.0757 0 0 0.89 359.88 175)" class="b">TV    </text><text transform="matrix(1.0757 0 0 1 400.28 175)" class="b">21         </text><text transform="matrix(1.0757 0 0 0.89 474.37 175)" class="b">ABC   </text><text transform="matrix(1.0757 0 0 1 514.78 175)" class="b">-31.8   </text><text transform="matrix(1.0757 0 0 1 568.66 175)" class="b">-122.6  </text><text transform="matrix(1.0757 0 0 1 622.54 175)" class="b">2</text><text transform="matrix(1.0757 0 0 0.89 629.27 175)" class="b">E</text><text transform="matrix(1.0757 0 0 1 636.01 175)" class="b">dge   </text><text transform="matrix(1.0757 0 0 1 676.42 175)" class="b">20.6   </text><text transform="matrix(1.0757 0 0 1 723.57 175)" class="r">12° </text><text transform="matrix(1.0757 0 0 1 750.50 175)" class="r">(356°)</text></g>
<g><text transform="matrix(1.0757 0 0 0.89 326.20 187)" class="b">K</text><text transform="matrix(1.0757 0 0 1 332.94 187)" class="b">24</text><text transform="matrix(1.0757 0 0 0.89 346.40 187)" class="b">DW      </text><text transform="matrix(1.0757 0 0 1 400.28 187)" class="b">49 </text><text transform="matrix(1.0757 0 0 1 420.49 187)" class="b">(24.1)        </text><text transform="matrix(1.0757 0 0 1 514.78 187)" class="b">-33.0   </text><text transform="matrix(1.0757 0 0 1 568.66 187)" class="b">-123.8  </text><text transform="matrix(1.0757 0 0 1 622.54 187)" class="b">1</text><text transform="matrix(1.0757 0 0 0.89 629.27 187)" class="b">E</text><text transform="matrix(1.0757 0 0 1 636.01 187)" class="b">dge   </text><text transform="matrix(1.0757 0 0 1 676.42 187)" class="b">60.7   </text><text transform="matrix(1.0757 0 0 1 723.57 187)" class="y">86°  </text><text transform="matrix(1.0757 0 0 1 757.24 187)" class="y">(71°)</text></g>
<g><text transform="matrix(1.0757 0 0 1 306.00 198)" class="w">a</text><text transform="matrix(1.0757 0 0 0.89 312.73 198)" class="w">C </text><text transform="matrix(1.0757 0 0 0.89 326.20 198)" class="b">KXMN</text><text transform="matrix(1.0757 0 0 1 353.14 198)" class="b">-</text><text transform="matrix(1.0757 0 0 0.89 359.88 198)" class="b">LD     </text><text transform="matrix(1.0757 0 0 1 407.02 198)" class="b">9               </text><text transform="matrix(1.0757 0 0 1 514.78 198)" class="b">-33.1   </text><text transform="matrix(1.0757 0 0 1 568.66 198)" class="b">-124.0  </text><text transform="matrix(1.0757 0 0 1 622.54 198)" class="b">1</text><text transform="matrix(1.0757 0 0 0.89 629.27 198)" class="b">E</text><text transform="matrix(1.0757 0 0 1 636.01 198)" class="b">dge   </text><text transform="matrix(1.0757 0 0 1 676.42 198)" class="b">58.9  </text><text transform="matrix(1.0757 0 0 1 716.83 198)" class="g">146° </text><text transform="matrix(1.0757 0 0 1 750.50 198)" class="g">(130°)</text></g>
<g filter="url(#s4)"><text transform="matrix(1.0757 0 0 0.89 312.73 209)" class="w">C </text><text transform="matrix(1.0757 0 0 0.89 326.20 209)" class="b">K</text><text transform="matrix(1.0757 0 0 1 332.94 209)" class="b">11</text><text transform="matrix(1.0757 0 0 0.89 346.40 209)" class="b">HM</text><text transform="matrix(1.0757 0 0 1 359.88 209)" class="b">-</text><text transform="matrix(1.0757 0 0 0.89 366.61 209)" class="b">D    </text><text transform="matrix(1.0757 0 0 1 400.28 209)" class="b">11               </text><text transform="matrix(1.0757 0 0 1 514.78 209)" class="b">-36.3   </text><text transform="matrix(1.0757 0 0 1 568.66 209)" class="b">-127.2  </text><text transform="matrix(1.0757 0 0 1 622.54 209)" class="b">2</text><text transform="matrix(1.0757 0 0 0.89 629.27 209)" class="b">E</text><text transform="matrix(1.0757 0 0 1 636.01 209)" class="b">dge   </text><text transform="matrix(1.0757 0 0 1 676.42 209)" class="b">83.6   </text><text transform="matrix(1.0757 0 0 1 723.57 209)" class="z">74°  </text><text transform="matrix(1.0757 0 0 1 757.24 209)" class="z">(58°)</text></g>
<g filter="url(#s4)"><text transform="matrix(1.0757 0 0 0.89 312.73 220)" class="w">C </text><text transform="matrix(1.0757 0 0 0.89 326.20 220)" class="p">CKKM</text><text transform="matrix(1.0757 0 0 1 353.14 220)" class="p">-</text><text transform="matrix(1.0757 0 0 0.89 359.88 220)" class="p">TV     </text><text transform="matrix(1.0757 0 0 1 407.02 220)" class="p">3               </text><text transform="matrix(1.0757 0 0 1 514.78 220)" class="p">-38.2   </text><text transform="matrix(1.0757 0 0 1 568.66 220)" class="p">-117.1  </text><text transform="matrix(1.0757 0 0 1 622.54 220)" class="p">2</text><text transform="matrix(1.0757 0 0 0.89 629.27 220)" class="p">E</text><text transform="matrix(1.0757 0 0 1 636.01 220)" class="p">dge   </text><text transform="matrix(1.0757 0 0 1 676.42 220)" class="p">96.2  </text><text transform="matrix(1.0757 0 0 1 716.83 220)" class="m">308° </text><text transform="matrix(1.0757 0 0 1 750.50 220)" class="m">(293°)</text></g>
<g filter="url(#s6)"><text transform="matrix(1.0757 0 0 0.89 326.20 231)" class="b">KXLY</text><text transform="matrix(1.0757 0 0 1 353.14 231)" class="b">-</text><text transform="matrix(1.0757 0 0 0.89 359.88 231)" class="b">TV    </text><text transform="matrix(1.0757 0 0 1 400.28 231)" class="b">22         </text><text transform="matrix(1.0757 0 0 0.89 474.37 231)" class="b">ABC   </text><text transform="matrix(1.0757 0 0 1 514.78 231)" class="b">-38.6   </text><text transform="matrix(1.0757 0 0 1 568.66 231)" class="b">-129.5  </text><text transform="matrix(1.0757 0 0 1 622.54 231)" class="b">2</text><text transform="matrix(1.0757 0 0 0.89 629.27 231)" class="b">E</text><text transform="matrix(1.0757 0 0 1 636.01 231)" class="b">dge   </text><text transform="matrix(1.0757 0 0 1 676.42 231)" class="b">64.9  </text><text transform="matrix(1.0757 0 0 1 716.83 231)" class="g">131° </text><text transform="matrix(1.0757 0 0 1 750.50 231)" class="g">(115°)</text></g>
<g><text transform="matrix(1.0757 0 0 0.89 312.73 243)" class="w">C </text><text transform="matrix(1.0757 0 0 0.89 326.20 243)" class="p">KXMN</text><text transform="matrix(1.0757 0 0 1 353.14 243)" class="p">-</text><text transform="matrix(1.0757 0 0 0.89 359.88 243)" class="p">LP    </text><text transform="matrix(1.0757 0 0 1 400.28 243)" class="p">11               </text><text transform="matrix(1.0757 0 0 1 514.78 243)" class="p">-39.8   </text><text transform="matrix(1.0757 0 0 1 568.66 243)" class="p">-118.6  </text><text transform="matrix(1.0757 0 0 1 622.54 243)" class="p">1</text><text transform="matrix(1.0757 0 0 0.89 629.27 243)" class="p">E</text><text transform="matrix(1.0757 0 0 1 636.01 243)" class="p">dge   </text><text transform="matrix(1.0757 0 0 1 676.42 243)" class="p">58.9  </text><text transform="matrix(1.0757 0 0 1 716.83 243)" class="g">146° </text><text transform="matrix(1.0757 0 0 1 750.50 243)" class="g">(130°)</text></g>
<g><text transform="matrix(1.0757 0 0 1 306.00 254)" class="w">a</text><text transform="matrix(1.0757 0 0 0.89 312.73 254)" class="w">C </text><text transform="matrix(1.0757 0 0 0.89 326.20 254)" class="b">KXMN</text><text transform="matrix(1.0757 0 0 1 353.14 254)" class="b">-</text><text transform="matrix(1.0757 0 0 0.89 359.88 254)" class="b">LP     </text><text transform="matrix(1.0757 0 0 1 407.02 254)" class="b">9 </text><text transform="matrix(1.0757 0 0 1 420.49 254)" class="b">(11.1)        </text><text transform="matrix(1.0757 0 0 1 514.78 254)" class="b">-39.9   </text><text transform="matrix(1.0757 0 0 1 568.66 254)" class="b">-130.8  </text><text transform="matrix(1.0757 0 0 1 622.54 254)" class="b">1</text><text transform="matrix(1.0757 0 0 0.89 629.27 254)" class="b">E</text><text transform="matrix(1.0757 0 0 1 636.01 254)" class="b">dge   </text><text transform="matrix(1.0757 0 0 1 676.42 254)" class="b">58.9  </text><text transform="matrix(1.0757 0 0 1 716.83 254)" class="g">146° </text><text transform="matrix(1.0757 0 0 1 750.50 254)" class="g">(130°)</text></g>
</g>
<g id="legend" font-size="11.2"><text transform="matrix(1.0757 0 0 0.89 346.7 269)" font-family="'DejaVu Sans Mono','Liberation Mono',monospace" font-size="10.4" fill="#fff">C </text><text x="360.6" y="270" textLength="124" lengthAdjust="spacing" font-family="'DejaVu Sans','Liberation Sans',sans-serif">= Co-channel warning</text>
<text transform="matrix(1.0757 0 0 1 558 269)" font-family="'DejaVu Sans Mono','Liberation Mono',monospace" font-size="10.4" fill="#fff">a </text><text x="571.4" y="270" textLength="157.6" lengthAdjust="spacing" font-family="'DejaVu Sans','Liberation Sans',sans-serif">= Adjacent channel warning</text></g>
<g id="chart">
<path d="M9 645.5H173M216 645.5H792M9 657.5H173M216 657.5H792M9 670.5H173M216 670.5H792M9 683.5H173M216 683.5H792M9 696.5H173M216 696.5H792M9 708.5H173M216 708.5H792M9 721.5H173M216 721.5H792M9 734.5H173M216 734.5H792M9 747.5H173M216 747.5H792" stroke="#c6c6c6" stroke-width="1" fill="none"/>
<path d="M9 645.5H173M216 645.5H792M9 657.5H173M216 657.5H792M9 670.5H173M216 670.5H792M9 683.5H173M216 683.5H792M9 696.5H173M216 696.5H792M9 708.5H173M216 708.5H792M9 721.5H173M216 721.5H792M9 734.5H173M216 734.5H792M9 747.5H173M216 747.5H792" stroke="#6a6a6a" stroke-width="1" stroke-dasharray="1 1" fill="none"/>
<rect x="39" y="632.4" width="9.9" height="127.8" fill="#e0e0e0" fill-opacity="0.8"/>
<rect x="69.9" y="632.4" width="30.9" height="127.8" fill="#e0e0e0" fill-opacity="0.8"/>
<rect x="13" y="626" width="51.6" height="10.9" fill="#fff"/>
<g fill="none" stroke="#000" stroke-width="1.7">
<path d="M7.6 631.55V761.05M173.5 631.55V761.05M7.6 632.4H13.0M64.7 632.4H110.6M162.6 632.4H173.5M7.6 760.2H9.6M16.2 760.2H30.8M37.4 760.2H52.2M58.8 760.2H61.6M68.2 760.2H102.3M108.9 760.2H124.0M130.6 760.2H142.7M152.9 760.2H163.2M173.4 760.2H173.5"/>
<path d="M214.7 631.55V761.05M792.8 631.55V761.05M214.7 632.4H482.6M524.0 632.4H792.8M224.8 760.2H235.2M245.4 760.2H266.1M276.4 760.2H297.1M307.3 760.2H328.0M338.2 760.2H358.9M369.1 760.2H389.9M400.1 760.2H420.8M431.0 760.2H451.7M461.9 760.2H482.7M492.9 760.2H513.6M523.8 760.2H544.5M554.7 760.2H575.4M585.6 760.2H606.4M616.6 760.2H637.3M647.5 760.2H668.2M678.4 760.2H699.2M709.4 760.2H730.1M740.3 760.2H761.0M771.2 760.2H781.6M791.9 760.2H792.8"/>
</g>
<g font-family="'Liberation Sans',Arial,Helvetica,sans-serif" fill="#000">
<g font-size="10.8" font-weight="bold" lengthAdjust="spacing"><text x="20" y="636" textLength="38.8">VHF Lo</text>
<text x="118.8" y="636" textLength="37.6">VHF Hi</text>
<text x="492" y="636" textLength="22.8">UHF</text></g>
<g font-size="11.2" text-anchor="middle">
<text x="194.1" y="636">dBm</text>
<text x="194" y="648">-10</text>
<text x="194" y="660" filter="url(#s5)">-20</text>
<text x="194" y="673" filter="url(#s5)">-30</text>
<text x="194" y="686" filter="url(#s5)">-40</text>
<text x="194" y="699">-50</text>
<text x="194" y="712">-60</text>
<text x="194" y="724" filter="url(#s5)">-70</text>
<text x="194" y="737" filter="url(#s5)">-80</text>
<text x="194" y="750" filter="url(#s5)">-90</text>
</g>
<text x="177.4" y="762" textLength="33.6" lengthAdjust="spacing" font-size="8.9">Channel</text>
</g>
<g font-family="'DejaVu Sans','Liberation Sans',sans-serif" font-size="6.8" text-anchor="middle" fill="#000">
<text x="12.9" y="762">2</text> <text x="34.1" y="762">4</text> <text x="55.5" y="762">5</text> <text x="64.9" y="762">6</text> <text x="105.6" y="762">7</text> <text x="127.3" y="762">9</text> <text x="147.8" y="762" letter-spacing="0.3">11</text> <text x="168.3" y="762" letter-spacing="0.3">13</text>
<text x="219.7" y="762" letter-spacing="0.3">14</text> <text x="240.3" y="762" letter-spacing="0.3">16</text> <text x="271.2" y="762" letter-spacing="0.3">19</text> <text x="302.2" y="762" letter-spacing="0.3">22</text> <text x="333.1" y="762" letter-spacing="0.3">25</text> <text x="364.0" y="762" letter-spacing="0.3">28</text> <text x="395.0" y="762" letter-spacing="0.3">31</text> <text x="425.9" y="762" letter-spacing="0.3">34</text> <text x="456.8" y="762" letter-spacing="0.3">37</text> <text x="487.8" y="762" letter-spacing="0.3">40</text> <text x="518.7" y="762" letter-spacing="0.3">43</text> <text x="549.6" y="762" letter-spacing="0.3">46</text> <text x="580.5" y="762" letter-spacing="0.3">49</text> <text x="611.5" y="762" letter-spacing="0.3">52</text> <text x="642.4" y="762" letter-spacing="0.3">55</text> <text x="673.3" y="762" letter-spacing="0.3">58</text> <text x="704.3" y="762" letter-spacing="0.3">61</text> <text x="735.2" y="762" letter-spacing="0.3">64</text> <text x="766.1" y="762" letter-spacing="0.3">67</text> <text x="786.8" y="762" letter-spacing="0.3">69</text>
</g>
</g>
<g id="bars" font-family="'DejaVu Sans Mono','Liberation Mono',monospace" font-size="9" fill="none">
<path d="M102.2 757.1H109.6" stroke="#fe0" stroke-width="5.9" stroke-linecap="round"/><path d="M101.2 757.1H110.6" stroke="#0a50c8" stroke-width="3.1"/><text transform="translate(109.3,751.0) rotate(-90)" fill="#0d5fd6">KSPS-TV</text>
<path d="M122.7 753.4H130.1" stroke="#e6df9c" stroke-width="5.9" stroke-linecap="round"/><path d="M121.7 753.4H131.1" stroke="#b87ae6" stroke-width="3.1"/><text transform="translate(129.8,747.6) rotate(-90)" fill="#c79eec">K09UP</text>
<path d="M163.8 747.4H171.2" stroke="#fe0" stroke-width="5.9" stroke-linecap="round"/><path d="M162.8 747.4H172.2" stroke="#0a50c8" stroke-width="3.1"/><text transform="translate(170.9,740.2) rotate(-90)" fill="#0d5fd6">KXLY-DT</text>
</g>
</svg></body></html>
